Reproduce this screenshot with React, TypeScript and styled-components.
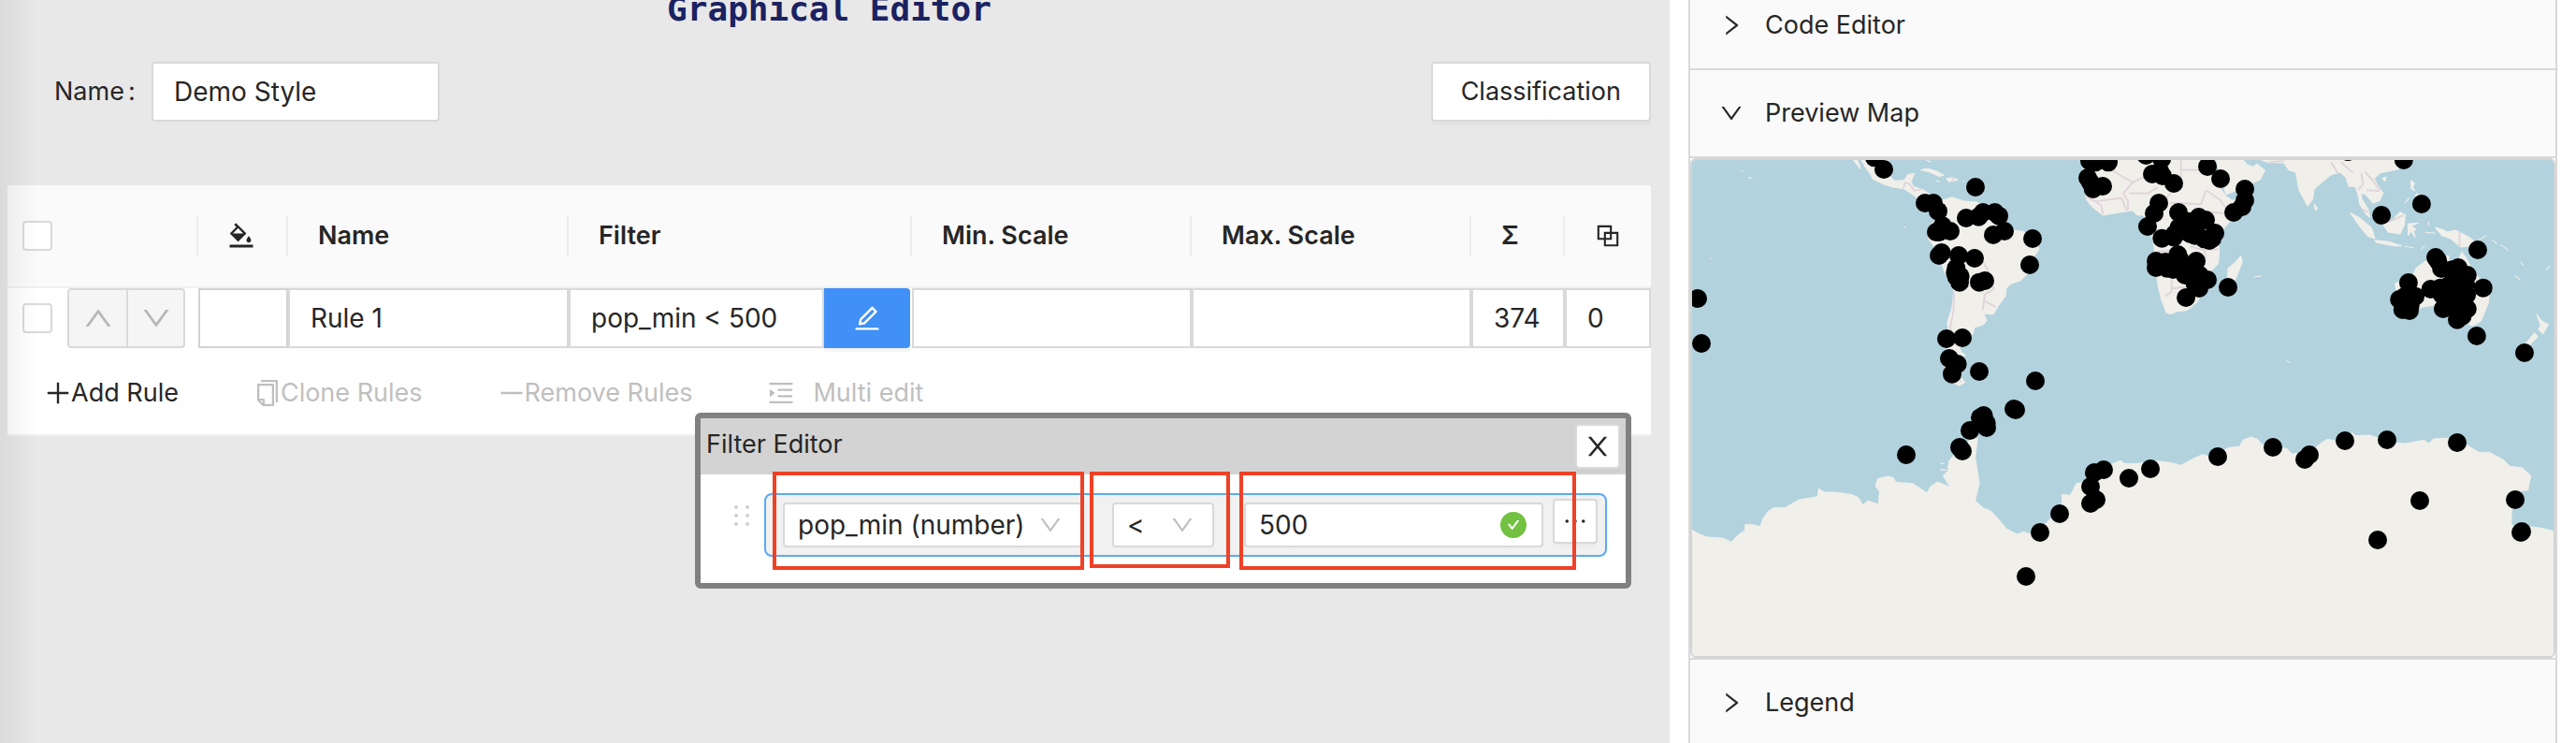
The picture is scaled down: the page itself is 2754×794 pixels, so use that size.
import React from 'react';
import styled, { createGlobalStyle } from 'styled-components';
import {
  AiFillCheckCircle,
  AiOutlineBgColors,
  AiOutlineBlock,
  AiOutlineCopy,
  AiOutlineDown,
  AiOutlineEdit,
  AiOutlineEllipsis,
  AiOutlineMenuUnfold,
  AiOutlineMinus,
  AiOutlinePlus,
  AiOutlineRight,
  AiOutlineUp,
} from 'react-icons/ai';

const GlobalStyle = createGlobalStyle`
  * { box-sizing: border-box; }
  body {
    margin: 0;
    background: #ffffff;
    color: #262626;
    font-family: Inter, "Liberation Sans", sans-serif;
    font-size: 27px;
    line-height: 44px;
  }
  button, input, select { font: inherit; color: inherit; }
  input, select { font-size: 28px; }
`;

const Page = styled.div`
  display: grid;
  grid-template-columns: 1785fr 929fr;
  column-gap: 20px;
  padding-right: 20px;
  height: 100vh;
  min-height: 640px;
  overflow: hidden;
`;

/* ---------- graphical editor ---------- */

const EditorPane = styled.main`
  position: relative;
  background: #e8e8e8;
  padding: 0 20px 0 8px;
  &::before {
    content: '';
    position: absolute;
    z-index: 1;
    inset: 0 auto 0 0;
    width: 40px;
    background: linear-gradient(to right, rgba(0, 0, 0, 0.06), rgba(0, 0, 0, 0));
    pointer-events: none;
  }
`;

const Title = styled.h1`
  margin: -22px 0 24px;
  text-align: center;
  font-family: "DejaVu Sans Mono", monospace;
  font-size: 36px;
  font-weight: 700;
  line-height: 64px;
  color: #1a2262;
`;

const NameBar = styled.div`
  display: flex;
  align-items: center;
  margin-bottom: 68px;
  padding-left: 50px;
`;

const NameLabel = styled.label`
  display: flex;
  gap: 4px;
  width: 104px;
`;

const TextInput = styled.input<{ $radius?: number }>`
  display: block;
  min-width: 0;
  width: 100%;
  height: 64px;
  padding: 0 22px;
  border: 2px solid #d9d9d9;
  border-radius: ${(p) => p.$radius ?? 0}px;
  background: #ffffff;
  outline: none;
`;

const NameField = styled.div`
  width: 308px;
`;

const DefaultButton = styled.button`
  height: 64px;
  margin-left: auto;
  padding: 0 30px;
  border: 2px solid #d9d9d9;
  border-radius: 4px;
  background: #ffffff;
  box-shadow: 0 4px 0 rgba(0, 0, 0, 0.02);
`;

const RulesCard = styled.section`
  background: #ffffff;
  border-bottom: 2px solid #f0f0f0;
  border-radius: 4px 4px 0 0;
`;

const RulesTable = styled.table`
  width: 100%;
  table-layout: fixed;
  border-collapse: separate;
  border-spacing: 0;
  td { padding: 0; }
`;

const HeadCell = styled.th`
  height: 110px;
  padding: 0;
  background: #fafafa;
  border-bottom: 2px solid #f0f0f0;
  text-align: left;
  font-weight: 600;
  &:first-child { border-top-left-radius: 4px; }
  &:last-child { border-top-right-radius: 4px; }
`;

const HeadContent = styled.div<{ $last?: boolean; $pad?: number }>`
  display: flex;
  align-items: center;
  height: 44px;
  padding-left: ${(p) => p.$pad ?? 32}px;
  border-right: ${(p) => (p.$last ? 'none' : '2px solid #ececec')};
`;

const Checkbox = styled.input`
  appearance: none;
  flex: none;
  width: 32px;
  height: 32px;
  margin: 0;
  border: 2px solid #d9d9d9;
  border-radius: 4px;
  background: #ffffff;
`;

const RowTools = styled.div`
  display: flex;
  align-items: center;
  gap: 16px;
  padding-left: 16px;
`;

const MoveGroup = styled.div`
  display: flex;
  border: 2px solid #d9d9d9;
  border-radius: 4px;
  background: #f5f5f5;
`;

const MoveButton = styled.button`
  display: grid;
  place-items: center;
  width: 61px;
  height: 60px;
  padding: 0;
  border: none;
  background: none;
  color: #b8b8b8;
  & + & {
    border-left: 2px solid #d9d9d9;
  }
`;

const SymbolButton = styled.button`
  display: block;
  width: 100%;
  height: 64px;
  border: 2px solid #d3d3d3;
  background: #ffffff;
`;

const FilterField = styled.div`
  display: flex;
  padding-right: 2px;
`;

const EditButton = styled.button`
  display: grid;
  place-items: center;
  flex: none;
  width: 92px;
  height: 64px;
  padding: 0;
  border: none;
  border-radius: 0 4px 4px 0;
  background: #4090f7;
  color: #ffffff;
  box-shadow: 0 4px 0 rgba(0, 0, 0, 0.04);
`;

const RuleActions = styled.footer`
  display: flex;
  align-items: center;
  gap: 81px;
  height: 92px;
  padding: 4px 40px 0;
`;

const ActionButton = styled.button<{ $gap?: number }>`
  display: flex;
  align-items: center;
  gap: ${(p) => p.$gap ?? 0}px;
  padding: 0;
  border: none;
  background: none;
  color: #262626;
  svg { margin: 0 -2px; }
  &:disabled { color: #bfbfbf; }
`;

/* ---------- floating filter editor ---------- */

const FilterWindow = styled.section`
  position: absolute;
  z-index: 2;
  top: 441px;
  left: 743px;
  width: 1001px;
  border: 6px solid #808080;
  border-radius: 6px;
  background: #ffffff;
`;

const WindowHeader = styled.header`
  display: flex;
  align-items: center;
  justify-content: space-between;
  height: 60px;
  padding: 0 6px;
  background: #d3d3d3;
`;

const WindowTitle = styled.h2`
  margin: 0;
  padding-bottom: 4px;
  font-size: 27px;
  font-weight: 400;
`;

const SquareButton = styled.button`
  display: grid;
  place-items: center;
  flex: none;
  width: 48px;
  height: 48px;
  padding: 0;
  border: 2px solid #d9d9d9;
  border-radius: 4px;
  background: #ffffff;
  box-shadow: 0 4px 0 rgba(0, 0, 0, 0.02);
`;

const WindowBody = styled.div`
  display: flex;
  gap: 16px;
  padding: 20px 20px 28px 36px;
`;

const DragHandle = styled.div`
  display: grid;
  grid-template-columns: 4px 4px;
  grid-auto-rows: 4px;
  gap: 5px 8px;
  align-content: start;
  padding-top: 13px;
`;

const DragDot = styled.span`
  border-radius: 50%;
  background: #cfcfcf;
`;

const Comparison = styled.div`
  display: flex;
  align-items: flex-start;
  flex: 1;
  padding: 4px 8px 8px 18px;
  border: 2px solid #5aa9f8;
  border-radius: 8px;
  background: #f1f1f1;
`;

const Field = styled.div<{ $width: number; $after: number }>`
  position: relative;
  width: ${(p) => p.$width}px;
  margin: 4px ${(p) => p.$after}px 0 0;
`;

const Select = styled.select`
  appearance: none;
  display: block;
  width: 100%;
  height: 48px;
  padding: 0 14px;
  border: 2px solid #d9d9d9;
  border-radius: 4px;
  background: #ffffff;
  outline: none;
`;

const ValueInput = styled.input`
  display: block;
  width: 100%;
  height: 48px;
  padding: 0 14px;
  border: 2px solid #d9d9d9;
  border-radius: 4px;
  background: #ffffff;
  outline: none;
`;

const FieldMark = styled.span<{ $right: number; $color: string }>`
  position: absolute;
  inset: 0 ${(p) => p.$right}px 0 auto;
  display: flex;
  align-items: center;
  color: ${(p) => p.$color};
  pointer-events: none;
`;

const Highlight = styled.div<{ $x: number; $w: number; $h: number }>`
  position: absolute;
  top: 57px;
  left: ${(p) => p.$x}px;
  width: ${(p) => p.$w}px;
  height: ${(p) => p.$h}px;
  border: 4px solid #ee4126;
  pointer-events: none;
`;

/* ---------- side panels ---------- */

const Panels = styled.aside`
  border: solid #d9d9d9;
  border-width: 0 2px;
  background: #fafafa;
`;

const PanelHeader = styled.button<{ $top?: number }>`
  display: flex;
  align-items: center;
  gap: 22px;
  width: 100%;
  padding: ${(p) => p.$top ?? 24}px 30px 24px;
  border: none;
  border-bottom: 2px solid #d9d9d9;
  background: #fafafa;
  text-align: left;
`;

const MapFrame = styled.div`
  background: #ffffff;
  border-bottom: 2px solid #d9d9d9;
`;

const MapView = styled.div`
  border: 2px solid #d3d3d3;
  border-radius: 6px;
  overflow: hidden;
  svg { display: block; width: 100%; height: auto; }
`;

type Region = { x: number; y: number; s: number; cities: [number, number][] };

/* City markers, grouped by region with that region's origin and horizontal scale. */
const REGIONS: Region[] = [
  {
    x: 1780, y: 0, s: 1 / 3,
    cities: [
      [672, 505], [702, 543], [996, 600], [834, 651], [861, 651], [876, 677], [870, 744], [890, 724], [880, 744],
      [915, 741], [966, 699], [1006, 695], [1020, 681], [1058, 681], [1071, 692], [1053, 753], [1089, 741],
      [1179, 765], [1170, 849], [879, 819], [887, 810], [942, 819], [993, 828], [934, 860], [931, 875], [935, 888],
      [947, 886], [945, 905], [1008, 905], [1026, 900], [903, 1086], [954, 1083], [912, 1149], [938, 1167],
      [921, 1199], [1008, 1191], [1188, 1221], [105, 957], [117, 1101],
    ],
  },
  {
    x: 1800, y: 400, s: 1 / 3,
    cities: [
      [1059, 111], [1065, 114], [962, 132], [951, 139], [971, 156], [972, 171], [918, 180], [885, 234], [894, 246],
      [714, 258], [1206, 447], [1143, 507], [1098, 648], [1317, 315], [1347, 306], [1305, 360], [1323, 402],
      [1305, 414], [1428, 333],
    ],
  },
  {
    x: 2270, y: 400, s: 1 / 3,
    cities: [
      [87, 303], [303, 264], [480, 234], [582, 273], [597, 258], [711, 213], [846, 210], [1071, 219], [951, 405],
      [816, 531], [1257, 402], [1275, 507], [1278, 504],
    ],
  },
  {
    x: 2020, y: 160, s: 1 / 3,
    cities: [
      [642, 36], [660, 40], [702, 40], [636, 90], [645, 105], [653, 126], [684, 117], [823, 18], [873, 30],
      [843, 78], [868, 70], [876, 84], [912, 108], [1020, 54], [1062, 93], [1140, 126], [1140, 162], [1131, 183],
      [1104, 201], [864, 171], [849, 204], [828, 246], [927, 201], [960, 230], [992, 216], [1014, 225],
      [928, 250], [945, 260], [970, 250], [980, 275], [874, 284], [912, 280], [915, 270], [1044, 267],
      [1035, 285], [1026, 291], [1010, 286], [855, 357], [855, 378], [885, 360], [925, 336], [890, 380],
      [910, 384], [940, 370], [930, 350], [984, 357], [948, 402], [995, 402], [1020, 417], [975, 415],
      [980, 430], [993, 444], [951, 474], [1086, 441], [965, 270], [905, 365], [960, 385], [870, 372], [985, 240],
    ],
  },
  {
    x: 2190, y: 160, s: 564 / 1568,
    cities: [
      [990, 210], [1109, 174], [1056, 33], [890, 6], [1276, 321], [1151, 345], [1157, 355], [1168, 381],
      [1218, 378], [1245, 402], [1292, 443], [1273, 597], [1415, 651], [1070, 426], [1043, 480], [1090, 470],
      [1075, 500], [1053, 513], [1073, 516], [1060, 470], [1136, 447], [1165, 443], [1170, 465], [1173, 510],
      [1205, 400], [1210, 440], [1240, 430], [1243, 465], [1200, 470], [1190, 490], [1245, 510], [1215, 545],
      [1230, 533], [1215, 510], [1180, 480], [1230, 490], [1190, 435], [1222, 415], [1070, 480], [1200, 385],
    ],
  },
];

const Land = styled.path`
  fill: #f0efea;
  stroke: #f0efea;
  stroke-width: 3;
  stroke-linejoin: round;
`;

const Frontier = styled.path`
  fill: none;
  stroke: #dfd2da;
  stroke-width: 5;
  stroke-linejoin: round;
`;

function WorldMap() {
  return (
    <svg viewBox="1809 171 921 530" role="img" aria-label="World map with cities">
      <rect x="1809" y="171" width="921" height="530" fill="#b2d2dd" />
      <g transform="translate(1780 0) scale(0.33333)">
        <Land d="M628 510 L645 540 660 560 665 573 700 590 730 600 765 605 790 620 815 640 850 650 880 645 828 608 795 598 790 580 800 556 778 560 768 578 735 580 718 560 715 510Z M603 512 L628 543 618 514Z M820 545 L840 540 870 548 895 562 880 566 850 552Z M903 572 L925 570 940 577 910 583Z M868 580 L880 582Z M838 513 L852 520Z M268 568 L280 572Z M245 547 L250 550Z M765 727 L772 730Z M145 828 L148 829Z M955 580 L960 582Z" />
        <Frontier d="M765 603 L770 585 785 590 800 612 825 606 M900 645 L915 670 950 690 M925 570 L922 580" />
      </g>
      <g transform="translate(2020 160) scale(0.33333)">
        <Land d="M160 165 L200 152 240 165 280 168 300 180 330 185 380 240 400 258 430 262 470 290 480 318 462 345 440 400 420 420 390 430 375 445 372 470 350 500 333 528 302 525 312 548 300 562 272 570 268 590 240 600 240 620 225 635 232 650 243 658 225 680 220 720 242 745 225 756 200 745 185 715 172 680 188 620 192 590 185 555 200 510 207 455 180 400 150 320 125 285 125 250 150 220 140 190Z" />
        <Frontier d="M208 455 L205 520 195 570 205 600 M300 360 L315 385 335 450 M330 450 L305 465 300 515 M305 485 L342 505 M210 715 L230 745" />
        <Land d="M620 30 L625 130 632 160 645 178 665 195 685 210 745 200 780 195 795 210 815 210 830 245 845 290 852 330 857 400 862 440 872 480 888 522 900 527 925 518 955 515 985 490 1010 450 1025 395 1055 365 1058 320 1052 290 1075 250 1105 215 1140 162 1100 162 1080 150 1060 120 1040 80 1025 55 1018 30Z M1086 380 L1110 360 1127 340 1132 360 1108 420 1095 440 1084 415Z" />
        <Frontier d="M625 150 L660 165 680 180 685 205 M665 165 L745 155 760 195 M720 70 L780 105 750 140 765 165 765 195 M780 105 L830 80 M935 30 L935 110 M935 65 L1015 65 M770 140 L830 140 860 120 M935 110 L905 135 880 165 860 180 M900 170 L1000 175 1015 130 M1015 130 L1060 160 1080 190 M1025 200 L1085 205 M860 325 L900 325 M965 310 L1000 320 1055 320 M885 470 L905 455 905 400 M905 445 L950 440 M860 260 L890 265 M690 30 L720 70 M1010 320 L1015 350" />
      </g>
      <g transform="translate(2190 160) scale(0.35969 0.33333)">
        <Land d="M498 30 L510 80 528 143 560 130 600 110 630 95 643 66 620 46 608 55 590 47 576 30Z M625 30 L655 41 700 42 715 65 735 72 745 130 770 180 785 160 790 125 840 80 868 72 885 90 893 118 912 118 922 150 925 175 945 208 955 216 950 190 932 160 928 138 945 145 965 172 985 162 995 140 975 108 968 92 985 75 1040 62 1070 30Z" />
        <Land d="M790 175 L800 188 793 195Z M992 92 L1004 88 1000 100Z M1078 98 L1088 108 1082 120 1090 132 1078 125Z M1095 140 L1105 152 1090 150Z M897 202 L920 215 960 250 970 284 950 278 925 245Z M970 290 L1010 295 1050 308 1030 309 975 298Z M995 240 L1020 230 1045 200 1060 208 1058 240 1045 270 1010 264Z M1068 238 L1100 235 1078 245 1092 255 1085 262 1090 280 1076 260 1070 275Z M1150 250 L1170 255 1185 264 1210 258 1250 280 1278 305 1245 310 1225 312 1195 285 1170 275Z" />
        <Land d="M1030 430 L1085 400 1092 380 1130 350 1190 340 1190 375 1215 370 1228 328 1240 345 1260 385 1310 455 1308 490 1285 550 1260 565 1220 545 1180 500 1150 498 1110 505 1080 520 1035 520 1040 480Z M1451 528 L1465 548 1486 560 1470 590 1456 575 1464 565Z M1445 587 L1454 600 1430 625 1405 650 1396 640 1420 620Z" />
        <Land d="M1388 403 L1400 416Z M1480 385 L1490 374Z M1405 360 L1410 370Z M1320 290 L1332 300Z M1345 305 L1366 322Z M1280 290 L1300 275Z M1108 318 L1118 308Z M1060 310 L1085 314Z M1120 265 L1148 268Z M1130 230 L1130 242Z M1060 170 L1072 155Z M708 676 L718 682Z M612 408 L632 404Z" />
        <Frontier d="M655 40 L700 36 M840 40 L860 75 M870 40 L905 75 M930 75 L935 110 920 130 M940 70 L965 100 985 130 M945 130 L985 132 M1010 232 L1055 210 M1222 262 L1222 310 M930 190 L950 200" />
      </g>
      <g transform="translate(1800 400) scale(0.33333)">
        <Land d="M20 496 L50 512 75 522 125 525 153 538 175 515 197 500 197 482 220 482 245 488 255 462 270 440 290 427 325 428 370 402 430 392 433 366 450 378 490 378 540 386 560 395 575 420 590 405 625 417 628 375 615 360 622 335 655 327 673 332 680 346 735 350 780 380 792 360 815 345 855 362 832 325 848 310 850 280 870 255 920 210 943 205 935 265 948 350 935 405 960 428 985 438 1010 465 1035 495 1070 513 1090 505 1110 512 1160 480 1190 450 1215 410 1213 385 1240 388 1260 350 1290 345 1320 310 1370 290 1400 276 1415 287 1460 287 1460 915 20 915Z M825 285 L835 287Z M822 305 L842 308Z M868 28 L900 25 882 36Z" />
      </g>
      <g transform="translate(2270 400) scale(0.33333)">
        <Land d="M-10 285 L30 288 110 278 150 283 185 292 225 270 255 257 275 264 340 235 372 232 385 210 410 201 430 208 445 225 525 238 540 255 600 250 635 220 655 208 685 215 735 188 745 197 790 195 820 205 870 220 905 222 965 211 980 222 995 207 1040 205 1100 225 1140 250 1175 250 1220 275 1240 295 1280 300 1307 325 1298 371 1265 375 1245 440 1245 485 1320 490 1350 495 1385 504 1385 915 -10 915Z" />
      </g>
      {REGIONS.flatMap((r) =>
        r.cities.map(([cx, cy]) => (
          <circle key={`${r.x}-${cx}-${cy}`} cx={r.x + cx * r.s} cy={r.y + cy / 3} r="10" />
        )),
      )}
    </svg>
  );
}

function CloseIcon() {
  return (
    <svg width="32" height="32" viewBox="0 0 1024 1024" fill="currentColor" aria-hidden="true">
      <path d="M563.8 512l262.5-312.9c4.4-5.2.7-13.1-6.1-13.1h-79.8c-4.7 0-9.2 2.1-12.3 5.7L511.6 449.8 295.1 191.7c-3-3.6-7.5-5.7-12.3-5.7H203c-6.8 0-10.5 7.9-6.1 13.1L459.4 512 196.9 824.9A7.95 7.95 0 0 0 203 838h79.8c4.7 0 9.2-2.1 12.3-5.7l216.5-258.1 216.5 258.1c3 3.6 7.5 5.7 12.3 5.7h79.8c6.8 0 10.5-7.9 6.1-13.1L563.8 512z" />
    </svg>
  );
}

const HEADINGS = ['Name', 'Filter', 'Min. Scale', 'Max. Scale', 'Σ'];
const COLUMNS = [204, 96, 300, undefined, 299, 299, 100, 92];

function RulesEditor() {
  return (
    <RulesCard>
      <RulesTable>
        <colgroup>
          {COLUMNS.map((w, i) => (
            <col key={i} width={w} />
          ))}
        </colgroup>
        <thead>
          <tr>
            <HeadCell>
              <HeadContent $pad={16}>
                <Checkbox type="checkbox" aria-label="Select all rules" />
              </HeadContent>
            </HeadCell>
            <HeadCell>
              <HeadContent $pad={30}>
                <AiOutlineBgColors size={32} title="Symbol" />
              </HeadContent>
            </HeadCell>
            {HEADINGS.map((h) => (
              <HeadCell key={h}>
                <HeadContent>{h}</HeadContent>
              </HeadCell>
            ))}
            <HeadCell>
              <HeadContent $last $pad={30}>
                <AiOutlineBlock size={32} title="Duplicates" />
              </HeadContent>
            </HeadCell>
          </tr>
        </thead>
        <tbody>
          <tr>
            <td>
              <RowTools>
                <Checkbox type="checkbox" aria-label="Select Rule 1" />
                <MoveGroup>
                  <MoveButton disabled aria-label="Move up">
                    <AiOutlineUp size={36} />
                  </MoveButton>
                  <MoveButton disabled aria-label="Move down">
                    <AiOutlineDown size={36} />
                  </MoveButton>
                </MoveGroup>
              </RowTools>
            </td>
            <td>
              <SymbolButton aria-label="Edit symbol" />
            </td>
            <td>
              <TextInput aria-label="Rule name" defaultValue="Rule 1" />
            </td>
            <td>
              <FilterField>
                <TextInput aria-label="Filter" defaultValue="pop_min < 500" />
                <EditButton aria-label="Edit filter">
                  <AiOutlineEdit size={32} />
                </EditButton>
              </FilterField>
            </td>
            <td>
              <TextInput aria-label="Min. Scale" />
            </td>
            <td>
              <TextInput aria-label="Max. Scale" />
            </td>
            <td>
              <TextInput aria-label="Amount" readOnly value="374" />
            </td>
            <td>
              <TextInput aria-label="Duplicates" readOnly value="0" />
            </td>
          </tr>
        </tbody>
      </RulesTable>
      <RuleActions>
        <ActionButton>
          <AiOutlinePlus size={32} />
          Add Rule
        </ActionButton>
        <ActionButton disabled>
          <AiOutlineCopy size={32} />
          Clone Rules
        </ActionButton>
        <ActionButton disabled>
          <AiOutlineMinus size={32} />
          Remove Rules
        </ActionButton>
        <ActionButton disabled $gap={20}>
          <AiOutlineMenuUnfold size={32} />
          Multi edit
        </ActionButton>
      </RuleActions>
    </RulesCard>
  );
}

function FilterEditor() {
  return (
    <FilterWindow aria-label="Filter Editor">
      <WindowHeader>
        <WindowTitle>Filter Editor</WindowTitle>
        <SquareButton aria-label="Close">
          <CloseIcon />
        </SquareButton>
      </WindowHeader>
      <WindowBody>
        <DragHandle>
          {[0, 1, 2, 3, 4, 5].map((i) => (
            <DragDot key={i} />
          ))}
        </DragHandle>
        <Comparison>
          <Field $width={320} $after={32}>
            <Select aria-label="Attribute">
              <option>pop_min (number)</option>
            </Select>
            <FieldMark $right={20} $color="#bfbfbf">
              <AiOutlineDown size={28} />
            </FieldMark>
          </Field>
          <Field $width={109} $after={32}>
            <Select aria-label="Operator">
              <option>&lt;</option>
            </Select>
            <FieldMark $right={20} $color="#bfbfbf">
              <AiOutlineDown size={28} />
            </FieldMark>
          </Field>
          <Field $width={320} $after={10}>
            <ValueInput aria-label="Value" defaultValue="500" />
            <FieldMark $right={16} $color="#72c140">
              <AiFillCheckCircle size={32} />
            </FieldMark>
          </Field>
          <SquareButton aria-label="More actions">
            <AiOutlineEllipsis size={32} />
          </SquareButton>
        </Comparison>
      </WindowBody>
      <Highlight $x={77} $w={333} $h={105} />
      <Highlight $x={416} $w={150} $h={103} />
      <Highlight $x={576} $w={360} $h={105} />
    </FilterWindow>
  );
}

export default function App() {
  return (
    <Page>
      <GlobalStyle />
      <EditorPane>
        <Title>Graphical Editor</Title>
        <NameBar>
          <NameLabel htmlFor="style-name">
            <span>Name</span>
            <span>:</span>
          </NameLabel>
          <NameField>
            <TextInput id="style-name" $radius={4} defaultValue="Demo Style" />
          </NameField>
          <DefaultButton>Classification</DefaultButton>
        </NameBar>
        <RulesEditor />
        <FilterEditor />
      </EditorPane>
      <Panels>
        <PanelHeader $top={5} aria-expanded={false}>
          <AiOutlineRight size={28} />
          Code Editor
        </PanelHeader>
        <PanelHeader aria-expanded>
          <AiOutlineDown size={28} />
          Preview Map
        </PanelHeader>
        <MapFrame>
          <MapView>
            <WorldMap />
          </MapView>
        </MapFrame>
        <PanelHeader aria-expanded={false}>
          <AiOutlineRight size={28} />
          Legend
        </PanelHeader>
      </Panels>
    </Page>
  );
}
